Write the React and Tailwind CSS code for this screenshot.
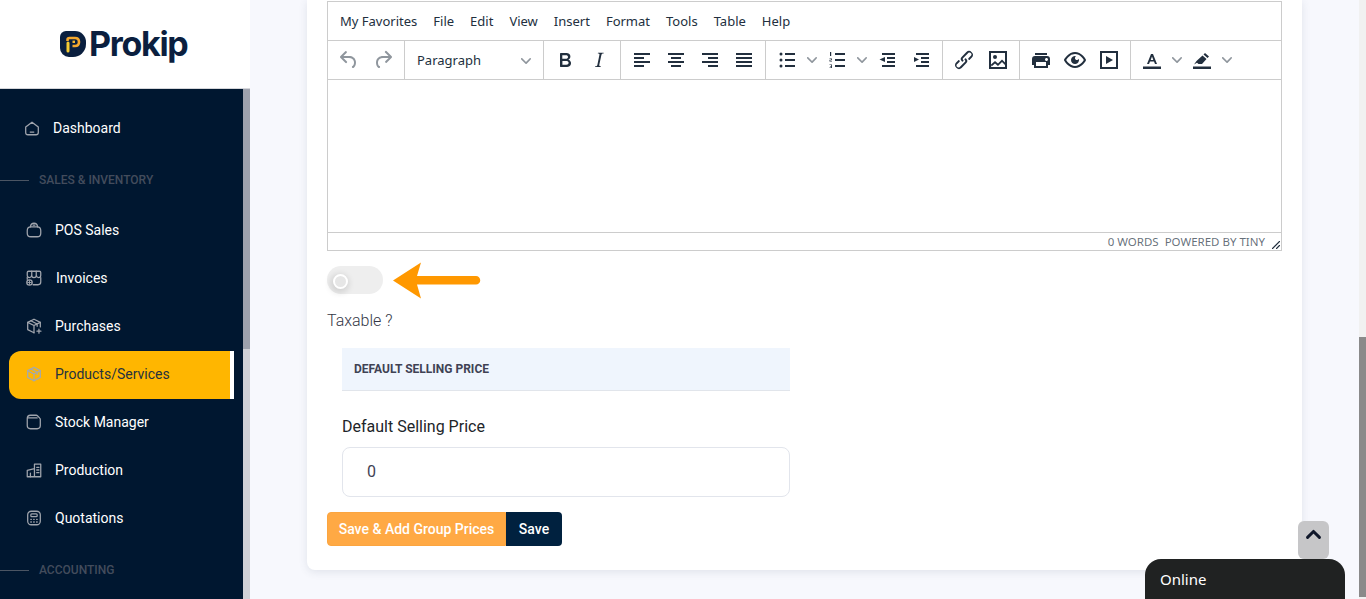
import React from "react";

const Tiny = ({ children, className = "" }) => (
  <svg viewBox="0 0 24 24" className={`w-6 h-6 fill-[#222f3e] ${className}`}>
    {children}
  </svg>
);

const Chevron = () => (
  <svg viewBox="0 0 10 10" className="w-2.5 h-2.5 fill-[#222f3e] opacity-50">
    <path d="M8.7 2.2c.3-.3.8-.3 1 0 .4.4.4.9 0 1.2L5.7 7.8c-.3.3-.9.3-1.2 0L.2 3.4a.8.8 0 0 1 0-1.2c.3-.3.8-.3 1.1 0L5 6l3.7-3.8Z" />
  </svg>
);

const Btn = ({ children }) => (
  <div className="w-[34px] h-[34px] flex items-center justify-center">{children}</div>
);

const Caret = () => (
  <div className="w-4 h-[34px] flex items-center justify-center">
    <Chevron />
  </div>
);

const Group = ({ children, last }) => (
  <div className={`flex items-center px-1 h-full ${last ? "" : "border-r border-[#cccccc]"}`}>{children}</div>
);

const Line = ({ x, y, w }) => <rect x={x} y={y} width={w} height="2" />;

const menus = ["My Favorites", "File", "Edit", "View", "Insert", "Format", "Tools", "Table", "Help"];

const Icon = ({ children, className = "" }) => (
  <svg
    viewBox="0 0 20 20"
    fill="none"
    stroke="currentColor"
    strokeWidth="1.4"
    strokeLinecap="round"
    strokeLinejoin="round"
    className={`w-[18px] h-[18px] shrink-0 ${className}`}
  >
    {children}
  </svg>
);

const navSales = [
  {
    name: "POS Sales",
    gap: "ml-[12px]",
    icon: (
      <>
        <path d="M2.500 10.500c0-2.500 2-4 4-4h7c2 0 4 1.500 4 4v3c0 2.500-1.500 4-4 4h-7c-2.500 0-4-1.500-4-4z" />
        <path d="M6 6.500C6.300 4 8 2.500 10 2.500s3.700 1.500 4 4" />
        <path d="M9 4.500h2" />
      </>
    ),
  },
  {
    name: "Invoices",
    gap: "ml-[13px]",
    icon: (
      <>
        <path d="M4 2.500h12c1 0 1.500 .5 1.500 1.500v3c0 1.500-1 2.500-2.300 2.500S13 8.500 12.800 7.500c-.3 1-1.400 2-2.800 2s-2.500-1-2.800-2C7 8.500 6 9.500 4.800 9.500S2.500 8.500 2.500 7V4c0-1 .5-1.500 1.500-1.500z" />
        <path d="M7.500 2.500v5M12.500 2.500v5" />
        <path d="M17.500 9.500v5c0 2-1 3-3 3H9" />
        <path d="M2.500 9.500v2" />
        <circle cx="5" cy="15" r="3" />
        <path d="M3 15h4M5 13v4" strokeWidth="1" />
      </>
    ),
  },
  {
    name: "Purchases",
    gap: "ml-[12px]",
    icon: (
      <>
        <path d="M10 2.500l7 3.500v5M10 2.500L3 6v8l7 3.500" />
        <path d="M3 6l7 3.500L17 6M10 9.500v8M6.500 4.200l7 3.600v2.500" />
        <path d="M15.500 13.500v4.500M13.300 15.700h4.400" />
      </>
    ),
  },
  {
    name: "Products/Services",
    gap: "ml-[12px]",
    active: true,
    icon: (
      <>
        <path d="M10 2.500l7 3.700v7.600l-7 3.700-7-3.700V6.200z" />
        <path d="M3 6.200l7 3.800 7-3.800M10 10v7.500M6.500 4.300l7 3.800v2.400" />
      </>
    ),
  },
  {
    name: "Stock Manager",
    gap: "ml-[12px]",
    icon: (
      <>
        <path d="M2.500 6c0-2 1.500-3.500 3.500-3.500h6.500c.5 0 1 .2 1.300.6l2.600 2.600c.4.300.6.8.6 1.300V14c0 2-1.500 3.500-3.500 3.500H6c-2 0-3.500-1.500-3.500-3.500z" />
        <path d="M3 5.500h10.500" />
      </>
    ),
  },
  {
    name: "Production",
    gap: "ml-[12px]",
    icon: (
      <>
        <path d="M2.500 17.500h15M10.500 17.500V3.500h7v14M2.500 17.500v-7l8-2" />
        <path d="M13 7h2.500M13 10h2.500M13 13h2.500M6 17.500v-4" />
      </>
    ),
  },
  {
    name: "Quotations",
    gap: "ml-[12px]",
    icon: (
      <>
        <rect x="3" y="2.500" width="14" height="15" rx="4" />
        <rect x="6.500" y="5.500" width="7" height="3" rx="1" />
        <path d="M6.500 11.500h.5M9.700 11.500h.5M13 11.500h.5M6.500 14.500h.5M9.700 14.500h.5M13 14.500h.5" strokeWidth="1.600" />
      </>
    ),
  },
];

const NavItem = ({ item }) => (
  <div
    className={`h-12 flex items-center ml-[9px] ${
      item.active
        ? "mt-px -mb-px pb-0.5 w-[225px] bg-[#ffb600] rounded-l-xl border-r-4 border-white text-[#26323f]"
        : "text-white"
    }`}
  >
    <span className={`ml-[16px] ${item.active ? "text-[#a3a9ae]" : "text-[#a0a5ad]"}`}>
      <Icon>{item.icon}</Icon>
    </span>
    <span className={`text-sm ${item.gap}`}>{item.name}</span>
  </div>
);

const SectionLabel = ({ children }) => (
  <div className="h-[54px] flex items-center pt-0.5">
    <div className="w-[29px] h-px bg-[#4b5563]" />
    <span className="ml-2.5 text-xs font-medium text-[#434c5c]">{children}</span>
  </div>
);

const Sidebar = () => (
  <aside className="w-[250px] shrink-0 h-[599px] flex flex-col font-[Roboto,sans-serif]">
    <div className="h-[89px] bg-white border-b border-[#d5d6da] flex items-center pl-[60px] pb-px">
      <svg viewBox="0 0 26 26" className="w-[26px] h-[26px]">
        <path d="M6 0h9a11 11 0 0 1 11 11v2a13 13 0 0 1-13 13H9a9 9 0 0 1-9-9V6a6 6 0 0 1 6-6z" fill="#0a1f3f" />
        <path d="M7.500 10V9c0-1.300 .8-2 2-2h5.500c2.500 0 4 1.700 4 4s-1.500 4-4 4h-2.500" fill="none" stroke="#f5a82e" strokeWidth="2.600" />
        <path d="M8 12v8" fill="none" stroke="#f5cb33" strokeWidth="3" strokeLinecap="round" />
        <path d="M12.500 10.800h2.500" fill="none" stroke="#f5b82e" strokeWidth="2.400" />
      </svg>
      <span className="ml-[3px] text-[34px] leading-none font-bold tracking-[-1.300px] text-[#0b1f3f] font-[Inter,sans-serif]">Prokip</span>
    </div>
    <div className="flex-1 flex min-h-0">
      <nav className="w-[243px] bg-[#001730] pt-[15px] overflow-hidden">
        <div className="h-12 flex items-center text-white">
          <span className="ml-[23px] text-[#a0a5ad]">
            <Icon>
              <path d="M3 9l7-5.500L17 9v6c0 1.500-1 2.500-2.500 2.500h-9C4 17.500 3 16.500 3 15z" />
              <path d="M8 14.500h4" />
            </Icon>
          </span>
          <span className="ml-[12px] text-sm">Dashboard</span>
        </div>
        <SectionLabel>SALES &amp; INVENTORY</SectionLabel>
        {navSales.map((item) => (
          <NavItem key={item.name} item={item} />
        ))}
        <SectionLabel>ACCOUNTING</SectionLabel>
      </nav>
      <div className="w-[7px] bg-[#d0d1d6]">
        <div className="h-[260px] bg-[#9ea2ad]" />
      </div>
    </div>
  </aside>
);

const Editor = () => (
  <div className="border border-[#cccccc] h-[250px] flex flex-col font-['Noto_Sans',sans-serif] text-[#222f3e]">
    <div className="h-[39px] shrink-0 flex items-center px-1 pt-0.5 border-b border-[#cccccc] text-[13px]">
      {menus.map((m) => (
        <span key={m} className="px-2">
          {m}
        </span>
      ))}
    </div>
    <div className="h-[39px] shrink-0 flex items-center border-b border-[#cccccc]">
      <Group>
        <Btn>
          <Tiny className="opacity-50">
            <path d="M6.400 8H12c3.700 0 6.200 2 6.800 5.100.6 2.700-.4 5.600-2.300 6.800a1 1 0 0 1-1-1.800c1.100-.6 1.800-2.700 1.400-4.600-.5-2.100-2.100-3.500-4.900-3.500H6.400l3.300 3.300a1 1 0 1 1-1.400 1.400l-5-5a1 1 0 0 1 0-1.400l5-5a1 1 0 0 1 1.400 1.400L6.400 8Z" />
          </Tiny>
        </Btn>
        <Btn>
          <Tiny className="opacity-50">
            <path d="M17.600 10H12c-2.800 0-4.400 1.400-4.900 3.500-.4 2 .3 4 1.400 4.600a1 1 0 1 1-1 1.800c-2-1.200-2.900-4.100-2.300-6.800.6-3 3-5.100 6.800-5.100h5.600l-3.300-3.300a1 1 0 1 1 1.400-1.400l5 5a1 1 0 0 1 0 1.400l-5 5a1 1 0 0 1-1.400-1.400l3.300-3.300Z" />
          </Tiny>
        </Btn>
      </Group>
      <Group>
        <div className="w-[130px] flex items-center justify-between pl-2 pr-2 pt-0.5 text-[13px]">
          <span>Paragraph</span>
          <Chevron />
        </div>
      </Group>
      <Group>
        <Btn>
          <Tiny>
            <path d="M7.800 19c-.3 0-.5 0-.6-.2l-.2-.5V5.700c0-.2 0-.4.2-.5l.6-.2h5c1.500 0 2.700.3 3.500 1 .7.6 1.100 1.400 1.100 2.500a3 3 0 0 1-.6 1.900c-.4.6-1 1-1.600 1.200.4.100.9.300 1.300.6s.8.7 1 1.200c.4.4.5 1 .5 1.600 0 1.300-.4 2.300-1.300 3-.8.7-2.100 1-3.800 1H7.800Zm5-8.300c.6 0 1.200-.1 1.600-.5.4-.3.6-.7.6-1.300 0-1.100-.8-1.700-2.300-1.700H9.300v3.500h3.400Zm.5 6c.7 0 1.300-.1 1.700-.4.4-.4.6-.9.6-1.500s-.2-1-.7-1.400c-.4-.3-1-.4-2-.4H9.400v3.800h4Z" />
          </Tiny>
        </Btn>
        <Btn>
          <Tiny>
            <path d="m16.700 4.700-.1.900h-.3c-.6 0-1 0-1.400.3-.3.3-.4.6-.5 1.100l-2.100 9.800v.6c0 .5.4.8 1.400.8h.2l-.2.8H8l.2-.8h.2c1.100 0 1.800-.5 2-1.500l2-9.800.1-.5c0-.6-.4-.8-1.400-.8h-.3l.2-.9h5.800Z" />
          </Tiny>
        </Btn>
      </Group>
      <Group>
        <Btn>
          <Tiny>
            <Line x="4" y="5" w="16" /><Line x="4" y="9" w="10" /><Line x="4" y="13" w="16" /><Line x="4" y="17" w="10" />
          </Tiny>
        </Btn>
        <Btn>
          <Tiny>
            <Line x="4" y="5" w="16" /><Line x="7" y="9" w="10" /><Line x="4" y="13" w="16" /><Line x="7" y="17" w="10" />
          </Tiny>
        </Btn>
        <Btn>
          <Tiny>
            <Line x="4" y="5" w="16" /><Line x="10" y="9" w="10" /><Line x="4" y="13" w="16" /><Line x="10" y="17" w="10" />
          </Tiny>
        </Btn>
        <Btn>
          <Tiny>
            <Line x="4" y="5" w="16" /><Line x="4" y="9" w="16" /><Line x="4" y="13" w="16" /><Line x="4" y="17" w="16" />
          </Tiny>
        </Btn>
      </Group>
      <Group>
        <Btn>
          <Tiny>
            <circle cx="6" cy="6" r="1.500" /><circle cx="6" cy="12" r="1.500" /><circle cx="6" cy="18" r="1.500" />
            <Line x="10" y="5" w="10" /><Line x="10" y="11" w="10" /><Line x="10" y="17" w="10" />
          </Tiny>
        </Btn>
        <Caret />
        <Btn>
          <Tiny>
            <Line x="10" y="5" w="10" /><Line x="10" y="11" w="10" /><Line x="10" y="17" w="10" />
            <rect x="5" y="4" width="1.200" height="4" />
            <path d="M4.500 10.500h2.500v1.800H5.300v.6H7v.6H4.500v-1.700h1.700v-.7H4.500zM4.500 16.500H7v3.500H4.500v-.6h1.700v-.9H5v-.5h1.200v-.9H4.500z" />
          </Tiny>
        </Btn>
        <Caret />
        <Btn>
          <Tiny>
            <Line x="7" y="5" w="13" /><Line x="12" y="9" w="8" /><Line x="12" y="13" w="8" /><Line x="7" y="17" w="13" />
            <path d="M10 9v5l-5.500-2.500z" />
          </Tiny>
        </Btn>
        <Btn>
          <Tiny>
            <Line x="7" y="5" w="13" /><Line x="12" y="9" w="8" /><Line x="12" y="13" w="8" /><Line x="7" y="17" w="13" />
            <path d="M5 9v5l5-2.500z" />
          </Tiny>
        </Btn>
      </Group>
      <Group>
        <Btn>
          <Tiny>
            <path d="M6.200 12.300a1 1 0 0 1 1.400 1.400l-2 2a2 2 0 1 0 2.600 2.800l4.800-4.800a1 1 0 0 0 0-1.400 1 1 0 1 1 1.400-1.300 2.900 2.900 0 0 1 0 4L9.600 20a3.900 3.900 0 0 1-5.500-5.500l2-2Zm11.600-.6a1 1 0 0 1-1.400-1.400l2-2a2 2 0 1 0-2.600-2.800L11 10.300a1 1 0 0 0 0 1.400A1 1 0 1 1 9.600 13a2.900 2.900 0 0 1 0-4L14.400 4a3.900 3.900 0 0 1 5.500 5.500l-2 2Z" />
          </Tiny>
        </Btn>
        <Btn>
          <Tiny>
            <path fillRule="evenodd" d="M3 3h18v18H3zM5 5v14h14V5z" />
            <circle cx="9" cy="9" r="2" />
            <path d="M5 16.500l4-3.500 3 2.500 4-4 3 3v2.500l-3-3-4 4-3-2.500-3.500 3z" />
          </Tiny>
        </Btn>
      </Group>
      <Group>
        <Btn>
          <Tiny>
            <path d="M18 8H6a3 3 0 0 0-3 3v6h2v3h14v-3h2v-6a3 3 0 0 0-3-3Zm-1 10H7v-4h10v4Zm.5-5c-.8 0-1.500-.7-1.500-1.500s.7-1.500 1.500-1.500 1.500.7 1.500 1.500-.7 1.500-1.500 1.500Zm.5-8H6v2h12V5Z" />
          </Tiny>
        </Btn>
        <Btn>
          <Tiny>
            <path fillRule="evenodd" d="M3.500 12.500c.5.8 1.100 1.600 1.800 2.300 2 2 4.200 3.200 6.700 3.200s4.700-1.200 6.700-3.200a16.200 16.200 0 0 0 2.100-2.800 15.700 15.700 0 0 0-2.100-2.800c-2-2-4.200-3.200-6.700-3.200a9.300 9.300 0 0 0-6.700 3.200A16.200 16.200 0 0 0 3.200 12c0 .2.2.3.3.5Zm-2.400-1 .7-1.200L4 7.800C6.200 5.400 8.900 4 12 4c3 0 5.800 1.400 8.100 3.800a18.200 18.200 0 0 1 2.800 3.700v1l-.7 1.200-2.100 2.500c-2.300 2.400-5 3.800-8.100 3.800-3 0-5.800-1.400-8.100-3.800a18.200 18.200 0 0 1-2.800-3.700 1 1 0 0 1 0-1Zm12-3.300a2 2 0 1 0 2.700 2.600 4 4 0 1 1-2.700-2.600Z" />
          </Tiny>
        </Btn>
        <Btn>
          <Tiny>
            <path fillRule="evenodd" d="M3 3h18v18H3zM5 5v14h14V5z" />
            <path d="M9 8v8l7-4z" />
          </Tiny>
        </Btn>
      </Group>
      <Group last>
        <Btn>
          <Tiny>
            <rect x="3" y="18.500" width="18" height="2.500" />
            <path fillRule="evenodd" d="M11 6h2l4 10h-2l-1-2.500h-4L9 16H7zM12 8.500L10.700 12h2.600z" />
          </Tiny>
        </Btn>
        <Caret />
        <Btn>
          <Tiny>
            <rect x="3" y="18.500" width="18" height="2.500" />
            <path d="M15 5l4 3.500-1.500 1.500-4-3.500zM12.500 7.500l4 3.500-4.500 5H8.500L7 14.800 4 16.500l2.500-3.500z" />
          </Tiny>
        </Btn>
        <Caret />
      </Group>
    </div>
    <div className="flex-1" />
    <div className="h-[18px] shrink-0 border-t border-[#cccccc] flex items-center justify-end text-[11.5px] text-[#222f3e]/70 pr-4 relative">
      <span>0 WORDS</span>
      <span className="ml-[6px]">POWERED BY TINY</span>
      <svg viewBox="0 0 10 10" className="w-2.5 h-2.5 absolute right-0 bottom-0 fill-[#222f3e]">
        <path d="M8.100 1.100A.5.500 0 1 1 8.900 1.900l-7 7A.5.500 0 1 1 1.100 8.100l7-7ZM8.100 5.100A.5.500 0 1 1 8.900 5.900l-3 3A.5.500 0 1 1 5.100 8.100l3-3Z" />
      </svg>
    </div>
  </div>
);

export default function App() {
  return (
    <div className="relative h-[599px] overflow-hidden flex bg-[#f7f8fd] font-[Roboto,sans-serif]">
      <Sidebar />
      <main className="flex-1 pl-[57px]">
        <div className="w-[995px] h-[570px] bg-white rounded-b-lg shadow-[0_2px_8px_rgba(60,70,100,0.12)] px-5 pt-px">
          <Editor />
          <div className="w-14 h-7 mt-[15px] rounded-full bg-[#eeeeee] flex items-center pl-1.5">
            <div className="w-[15px] h-[15px] mt-0.5 rounded-full bg-[#e6e6e6] border-2 border-white shadow-[-1px_2px_6px_2px_rgba(0,0,0,0.12)]" />
          </div>
          <div className="mt-[15px] text-base leading-6 text-[#343746] font-light">Taxable ?</div>
          <div className="ml-[15px] w-[448px] mt-[15px]">
            <div className="h-[43px] bg-[#eff5fd] border-b border-[#e1e5eb] flex items-center pl-3 text-xs font-bold text-[#3f4254]">
              DEFAULT SELLING PRICE
            </div>
            <div className="mt-6 text-base leading-6 text-[#212529]">Default Selling Price</div>
            <div className="mt-2 h-[50px] border border-[#e2e5ec] rounded-lg flex items-center pl-6 text-base text-[#3f4254]">0</div>
          </div>
          <div className="mt-[15px] flex text-sm font-medium text-white">
            <button className="h-[34px] w-[179px] bg-[#ffa944] border border-[#fba540] rounded-l">Save &amp; Add Group Prices</button>
            <button className="h-[34px] w-14 bg-[#00213f] rounded-r">Save</button>
          </div>
        </div>
      </main>
      <div className="w-[7px] bg-[#f1f1f1] pt-[337px]">
        <div className="h-[260px] bg-[#8a8a8a]" />
      </div>

      {/* orange arrow laid over the page */}
      <svg viewBox="0 0 90 38" className="absolute left-[392px] top-[262px] w-[90px] h-[38px]">
        <path d="M1 18.500L29 0.500L25 14H84a4 4 0 0 1 0 8.500H25L29 36.500z" fill="#ff9800" />
      </svg>

      <div className="absolute left-[1298px] top-[521px] w-[31px] h-[38px] rounded-md bg-[#c6c6c8] flex justify-center pt-[7px]">
        <svg viewBox="0 0 20 14" className="w-[17px] h-3" fill="none" stroke="#0f172a" strokeWidth="3.500" strokeLinecap="round" strokeLinejoin="round">
          <path d="M3 11l7-7 7 7" />
        </svg>
      </div>
      <div className="absolute left-[1145px] top-[559px] w-[200px] h-10 rounded-t-2xl bg-[#202222] text-white flex items-center pl-[15px] text-[15px] font-['Noto_Sans',sans-serif]">
        Online
      </div>
    </div>
  );
}
